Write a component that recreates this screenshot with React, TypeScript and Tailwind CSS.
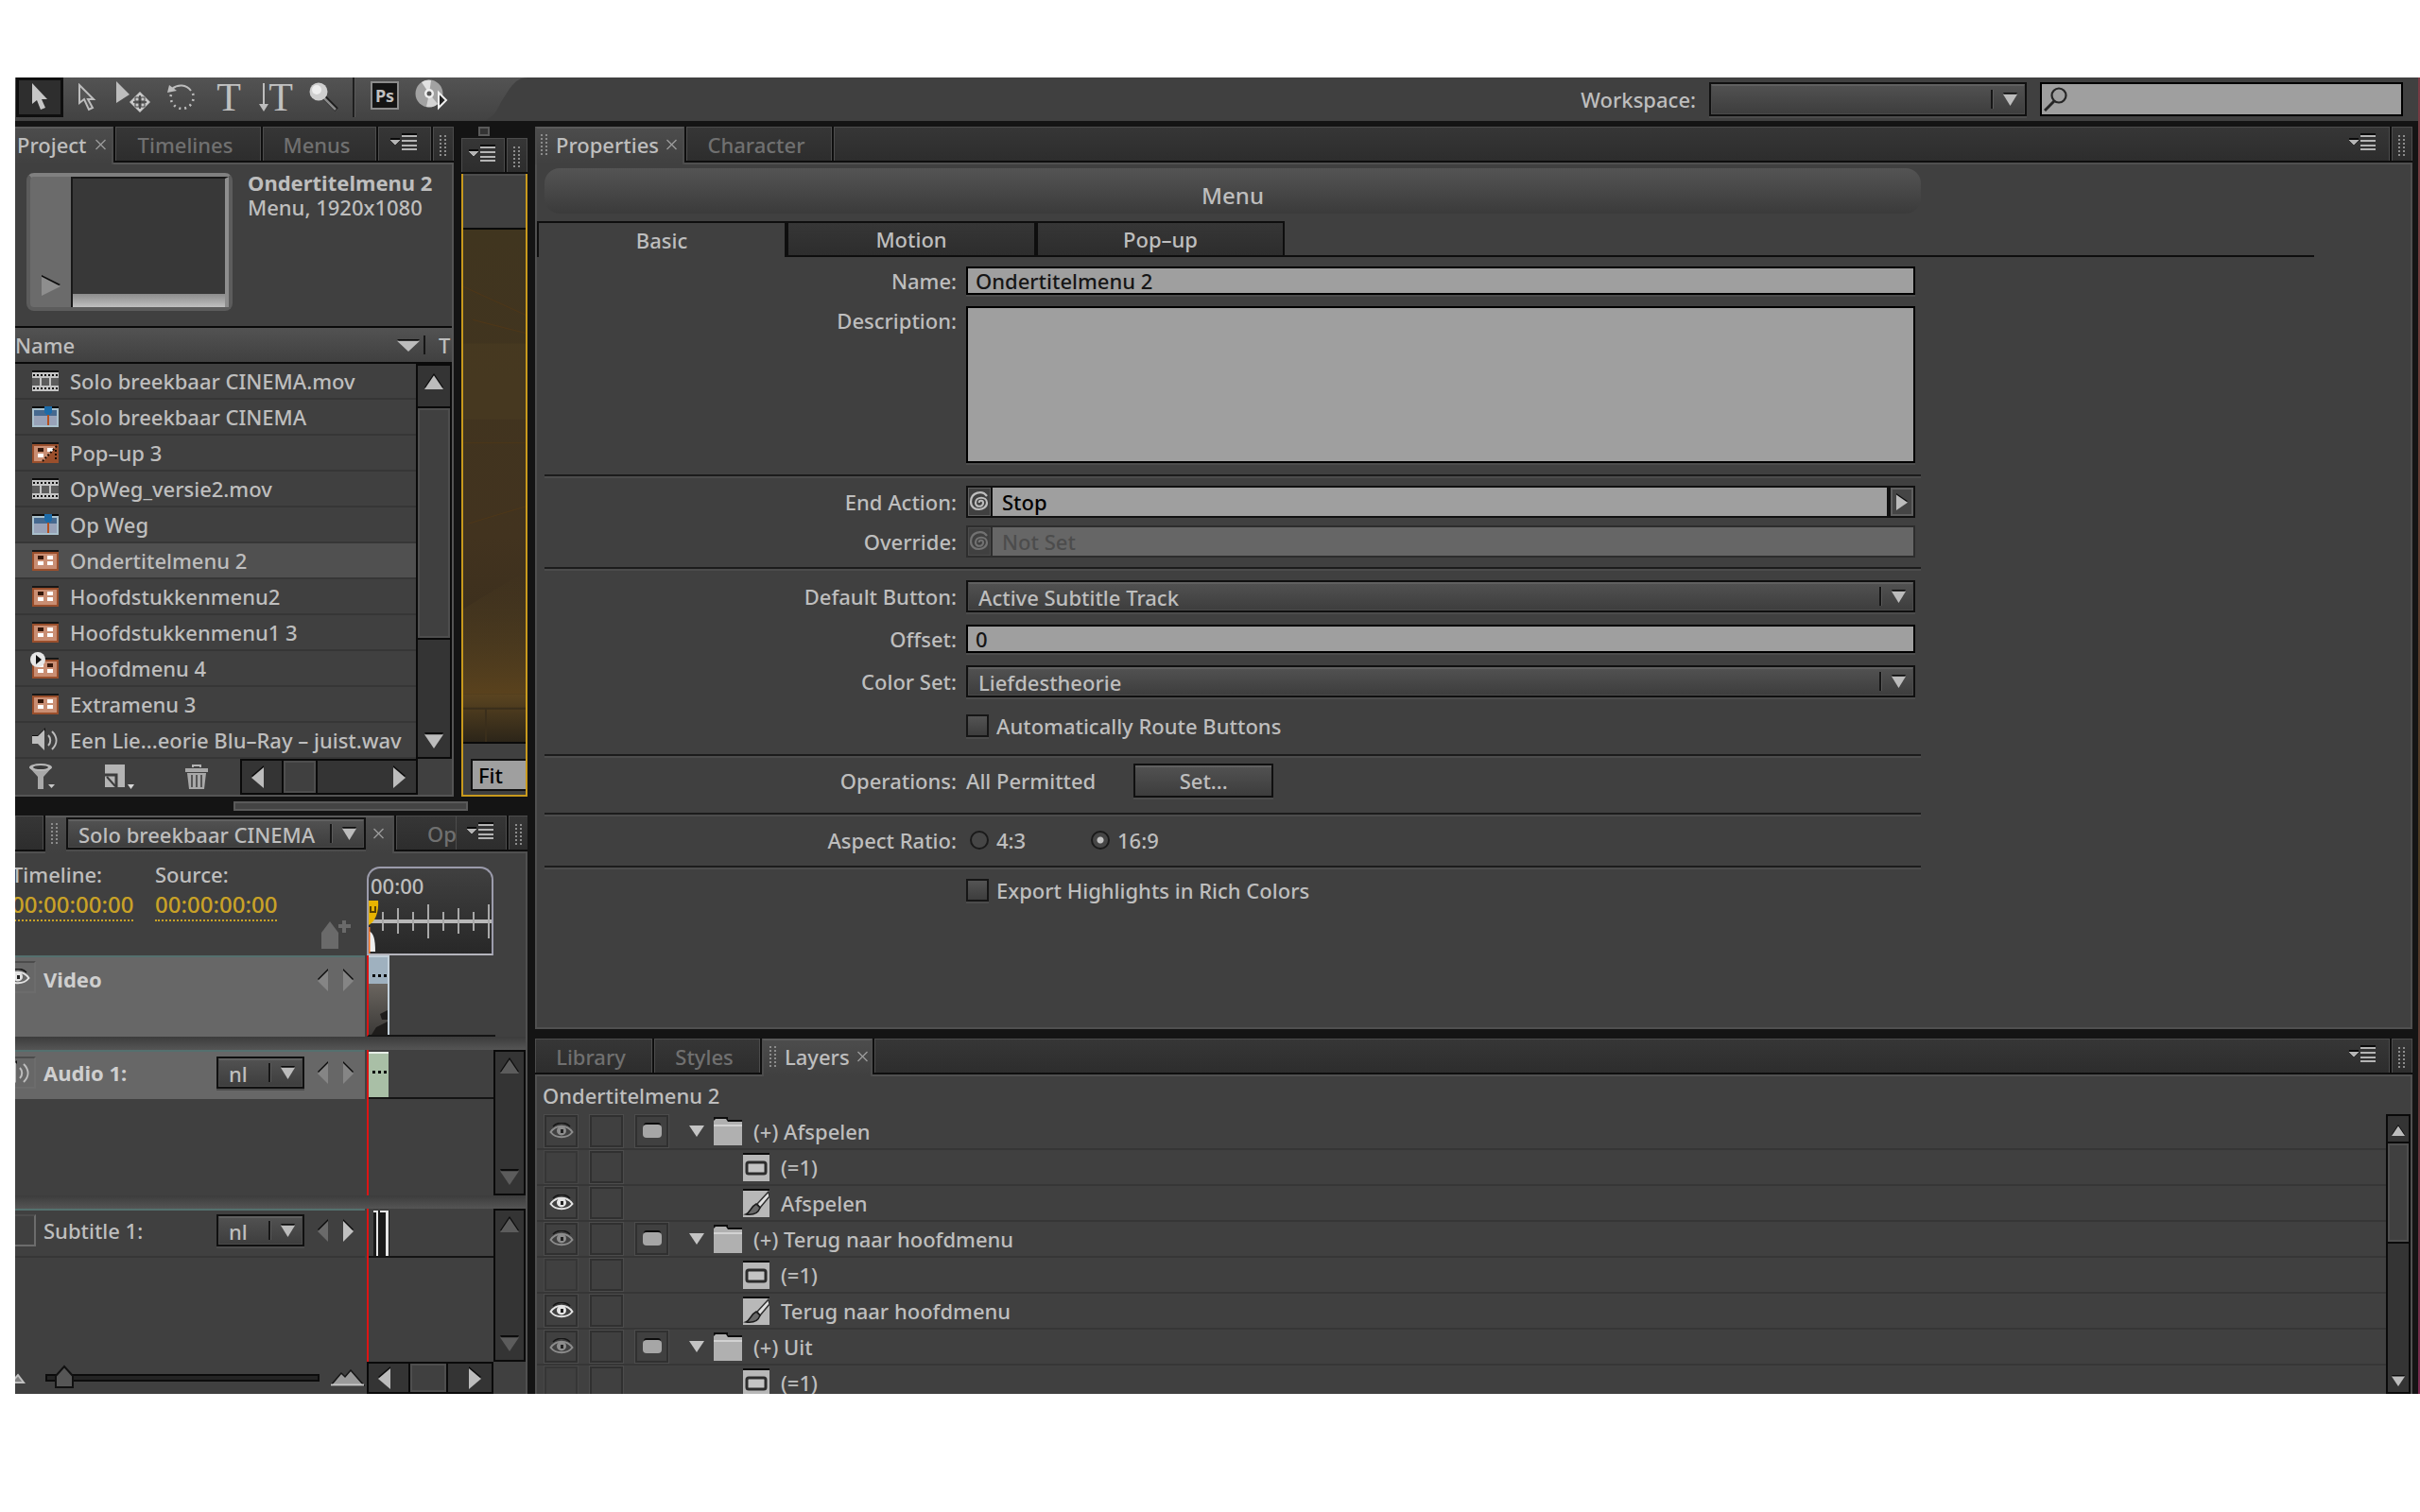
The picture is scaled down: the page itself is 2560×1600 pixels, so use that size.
import { useState } from "react";
import type { ReactNode } from "react";
import clsx from "clsx";

type AssetKind = "movie" | "timeline" | "menu" | "popup" | "first" | "audio";

const assets: { name: string; kind: AssetKind }[] = [
  { name: "Solo breekbaar CINEMA.mov", kind: "movie" },
  { name: "Solo breekbaar CINEMA", kind: "timeline" },
  { name: "Pop–up 3", kind: "popup" },
  { name: "OpWeg_versie2.mov", kind: "movie" },
  { name: "Op Weg", kind: "timeline" },
  { name: "Ondertitelmenu 2", kind: "menu" },
  { name: "Hoofdstukkenmenu2", kind: "menu" },
  { name: "Hoofdstukkenmenu1 3", kind: "menu" },
  { name: "Hoofdmenu 4", kind: "first" },
  { name: "Extramenu 3", kind: "menu" },
  { name: "Een Lie...eorie Blu–Ray – juist.wav", kind: "audio" },
];

type LayerKind = "group" | "highlight" | "image";

const layers: { name: string; kind: LayerKind }[] = [
  { name: "(+) Afspelen", kind: "group" },
  { name: "(=1)", kind: "highlight" },
  { name: "Afspelen", kind: "image" },
  { name: "(+) Terug naar hoofdmenu", kind: "group" },
  { name: "(=1)", kind: "highlight" },
  { name: "Terug naar hoofdmenu", kind: "image" },
  { name: "(+) Uit", kind: "group" },
  { name: "(=1)", kind: "highlight" },
];

/* ---------- small parts ---------- */

const Grip = () => (
  <svg width="8" height="22" viewBox="0 0 8 22" className="shrink-0" shapeRendering="crispEdges">
    {[0, 4, 8, 12, 16, 20].map((y) => (
      <g key={y} fill="#8c8c8c">
        <rect x="0" y={y} width="2" height="2" />
        <rect x="5" y={y} width="2" height="2" />
      </g>
    ))}
  </svg>
);

const GripBox = () => (
  <div className="flex h-9 w-[22px] shrink-0 justify-center border border-b-0 border-[#4c4c4c] bg-linear-to-b from-[#363636] to-[#2d2d2d] pt-2">
    <Grip />
  </div>
);

const MenuIcon = () => (
  <svg width="30" height="20" viewBox="0 0 30 20" shapeRendering="crispEdges">
    <path d="M0 5h10v2H0zM12 0h16v2H12z" fill="#0a0a0a" />
    <path d="M0 7h10l-5 6z" fill="#b4b4b4" />
    <path d="M12 2h16v2H12zM12 7h16v2H12zM12 12h16v2H12zM12 16h16v2H12z" fill="#b4b4b4" />
  </svg>
);

const PanelMenu = ({ className }: { className?: string }) => (
  <button
    type="button"
    aria-label="Panel menu"
    className={clsx(
      "flex h-9 shrink-0 items-start justify-center border border-b-0 border-[#4c4c4c] bg-linear-to-b from-[#363636] to-[#2d2d2d] pt-[6px]",
      className
    )}
  >
    <MenuIcon />
  </button>
);

const CloseButton = () => (
  <button type="button" aria-label="Close" className="shrink-0">
    <svg width="11" height="12" viewBox="0 0 11 12" fill="none" stroke="#9a9a9a" strokeWidth="1.4">
      <path d="M.5 1l10 10M10.5 1l-10 10" />
    </svg>
  </button>
);

const Tab = ({ children, className }: { children?: ReactNode; className?: string }) => (
  <button
    type="button"
    className={clsx(
      "h-9 shrink-0 overflow-hidden border border-b-0 border-[#4c4c4c] bg-linear-to-b from-[#363636] to-[#2d2d2d] pr-[6px] text-center leading-9 text-[#707070]",
      className
    )}
  >
    {children}
  </button>
);

const ActiveTab = ({ children, className }: { children: ReactNode; className?: string }) => (
  <div
    className={clsx(
      "relative z-10 -mb-[2px] flex h-10 shrink-0 items-center border-t-2 border-r-2 border-[#5a5a5a] border-r-[#4c4c4c] bg-linear-to-b from-[#4c4c4c] to-[#404040] pb-1",
      className
    )}
  >
    {children}
  </div>
);

const arrowPaths = {
  up: "M0 14L10 0l10 14z",
  down: "M0 0h20L10 14z",
  left: "M14 0v22L0 11z",
  right: "M0 0l14 11L0 22z",
};

const Arrow = ({
  dir,
  width,
  height,
  color = "#bcbcbc",
}: {
  dir: "up" | "down" | "left" | "right";
  width: number;
  height: number;
  color?: string;
}) => (
  <svg
    width={width}
    height={height}
    viewBox={dir === "up" || dir === "down" ? "0 -2 20 16" : "0 -2 14 24"}
    preserveAspectRatio="none"
  >
    <path d={arrowPaths[dir]} fill="#0c0c0c" transform="translate(0 -2)" />
    <path d={arrowPaths[dir]} fill={color} />
  </svg>
);

const Dropdown = ({
  id,
  label,
  value,
  className,
}: {
  id: string;
  label?: string;
  value: string;
  className?: string;
}) => (
  <div
    className={clsx(
      "relative border-2 border-[#101010] bg-linear-to-b from-[#525252] to-[#3d3d3d] shadow-[0_2px_0_#4c4c4c]",
      className
    )}
  >
    <select
      id={id}
      aria-label={label}
      defaultValue={value}
      className="block h-full w-full appearance-none border border-t-2 border-[#4a4a4a] border-t-[#606060] bg-transparent pr-9 pb-1 pl-[10px] text-[#bebebe] outline-none"
    >
      <option value={value}>{value}</option>
    </select>
    <div className="pointer-events-none absolute inset-y-0 right-2 flex items-center gap-[10px]">
      <span className="h-5 w-[3px] border-l-2 border-[#161616] bg-[#5a5a5a]" />
      <Arrow dir="down" width={15} height={14} />
    </div>
  </div>
);

const VScroll = ({
  size = "md",
  thumb,
  color,
  className,
}: {
  size?: "sm" | "md" | "lg";
  thumb?: string;
  color?: string;
  className?: string;
}) => {
  const width = size === "sm" ? 14 : 20;
  const height = size === "sm" ? 12 : 17;
  return (
    <div className={clsx("flex shrink-0 flex-col items-center border-2 border-[#0a0a0a] bg-[#343434]", className)}>
      <button
        type="button"
        aria-label="Scroll up"
        className={clsx("flex w-full items-center justify-center", size === "lg" ? "h-[45px] pb-3" : "h-[29px]")}
      >
        <Arrow dir="up" width={width} height={height} color={color} />
      </button>
      {thumb && (
        <div className={clsx("w-full border-2 border-[#4e4e4e] bg-[#404040] outline-2 outline-[#0a0a0a]", thumb)} />
      )}
      <button
        type="button"
        aria-label="Scroll down"
        className={clsx("mt-auto flex w-full items-center justify-center", size === "sm" ? "h-6" : "h-9")}
      >
        <Arrow dir="down" width={width} height={height} color={color} />
      </button>
    </div>
  );
};

const HScroll = ({ thumb, className }: { thumb: string; className?: string }) => (
  <div className={clsx("flex shrink-0 items-center border-2 border-[#0a0a0a] bg-[#343434]", className)}>
    <button type="button" aria-label="Scroll left" className="flex h-full w-11 items-center pl-[10px]">
      <Arrow dir="left" width={13} height={24} />
    </button>
    <div className={clsx("h-full border-2 border-[#4e4e4e] bg-[#404040] outline-2 outline-[#0a0a0a]", thumb)} />
    <button type="button" aria-label="Scroll right" className="ml-auto flex h-full w-9 items-center justify-center">
      <Arrow dir="right" width={13} height={24} />
    </button>
  </div>
);

const EyeIcon = ({ color }: { color: string }) => (
  <svg width="26" height="18" viewBox="0 0 26 18" fill="none" stroke={color}>
    <path d="M4 4C9-1 17-1 22 4" stroke="#151515" strokeWidth="1.5" />
    <path d="M1.5 10C7 1.500 19 1.500 24.500 10C19 17 7 17 1.500 10z" strokeWidth="2" />
    <circle cx="13" cy="8.500" r="5" fill={color} stroke="none" />
    <rect x="12" y="7" width="3" height="4" fill="#222" stroke="none" />
  </svg>
);

const SpeakerIcon = () => (
  <svg width="28" height="26" viewBox="0 0 28 26">
    <path d="M0 8h6l8-8v3L6 11H0z" fill="#101010" />
    <path d="M0 9h6l7-7v22l-7-7H0z" fill="#bdbdbd" />
    <path d="M17 8c3 3 3 8 0 11M21 4c6 6 6 13 0 19" fill="none" stroke="#bdbdbd" strokeWidth="2" />
  </svg>
);

/* ---------- asset icons ---------- */

const AssetIcon = ({ kind }: { kind: AssetKind }) => {
  if (kind === "audio") return <SpeakerIcon />;
  if (kind === "movie") {
    return (
      <svg width="28" height="22" viewBox="0 0 28 22" shapeRendering="crispEdges">
        <rect width="28" height="22" fill="#c4c4c4" />
        <rect width="28" height="2" fill="#0c0c0c" />
        <rect y="8" width="28" height="8" fill="#5c5c5c" />
        <path d="M8 8h2v8H8zM18 8h2v8h-2z" fill="#c4c4c4" />
        <path d="M1 5h28M1 19h28" stroke="#0c0c0c" strokeWidth="2" strokeDasharray="2 2" />
      </svg>
    );
  }
  if (kind === "timeline") {
    return (
      <svg width="28" height="22" viewBox="0 0 28 22" shapeRendering="crispEdges">
        <rect width="28" height="22" fill="#a9c0cc" />
        <rect width="28" height="2" fill="#0c0c0c" />
        <rect x="2" y="4" width="24" height="16" fill="#98a2b8" />
        <rect x="2" y="4" width="24" height="6" fill="#46698f" />
        <path d="M13 0h8v6l-2 3h-4l-2-3z" fill="#1c6ba8" />
        <rect x="16" y="9" width="2" height="11" fill="#b5501e" />
      </svg>
    );
  }
  return (
    <svg width="30" height="34" viewBox="-2 -6 30 34" className="-ml-[2px]">
      <g shapeRendering="crispEdges">
        <rect width="28" height="22" fill="#9a4f2c" />
        <rect width="28" height="2" fill="#171717" />
        <rect x="2" y="4" width="24" height="16" fill="#c98e73" />
        <rect x="6" y="6" width="6" height="4" fill={kind === "first" ? "#fff" : "#35180b"} />
        <rect x="16" y="6" width="6" height="4" fill={kind === "first" ? "#35180b" : "#fff"} />
        <rect x="6" y="12" width="6" height="4" fill="#fff" />
        {kind !== "popup" && <rect x="16" y="12" width="6" height="4" fill="#fff" />}
      </g>
      {kind === "popup" && (
        <>
          <path d="M26 4v16H12z" fill="#9a4f2c" />
          <path d="M26 4L11 20M25 8v12" stroke="#1a0d06" strokeWidth="2" strokeDasharray="2 2" />
        </>
      )}
      {kind === "first" && (
        <>
          <circle cx="6" cy="2" r="8" fill="#e6e6e6" />
          <path d="M4 -3l6 5-6 5z" fill="#111" />
        </>
      )}
    </svg>
  );
};

const LayerIcon = ({ kind }: { kind: LayerKind }) => {
  if (kind === "group") {
    return (
      <svg width="30" height="30" viewBox="0 0 30 30">
        <path d="M0 0h15v3h15v4H0z" fill="#0c0c0c" />
        <path d="M0 4l2-2h11l2 3h15v25H0z" fill="#b0b0b0" />
        <path d="M0 9h30" stroke="#d2d2d2" strokeWidth="2" />
      </svg>
    );
  }
  return (
    <svg width="28" height="30" viewBox="0 0 28 30">
      <rect width="28" height="30" fill="#b8b8b8" />
      <rect width="28" height="2" fill="#0c0c0c" />
      {kind === "highlight" ? (
        <rect x="4" y="10" width="20" height="12" rx="2" fill="#c4c4c4" stroke="#2c2c2c" strokeWidth="3" />
      ) : (
        <>
          <path d="M27 3L15 16l3 4L28 8z" fill="#e0e0e0" stroke="#303030" strokeWidth="1.5" />
          <path d="M14 16l4 4c-2 6-8 8-15 7 5-2 5-8 11-11z" fill="#686868" stroke="#1c1c1c" strokeWidth="1.5" />
        </>
      )}
    </svg>
  );
};

/* ---------- toolbar ---------- */

const toolIcons: { name: string; icon: ReactNode }[] = [
  {
    name: "Selection Tool",
    icon: (
      <svg width="18" height="30" viewBox="0 0 18 30">
        <path d="M1 0v22l5-4 4 10 5-2-4-9h6z" fill="#c6c6c6" />
      </svg>
    ),
  },
  {
    name: "Direct Select Tool",
    icon: (
      <svg width="20" height="30" viewBox="0 0 20 30">
        <path d="M2 2v19l5-4 5 11 4-2-5-9h6z" fill="#555" stroke="#bdbdbd" strokeWidth="2" />
      </svg>
    ),
  },
  {
    name: "Move Tool",
    icon: (
      <svg width="38" height="34" viewBox="0 0 38 34">
        <path d="M0 0v23l14-9z" fill="#bdbdbd" />
        <path d="M25 11l11 11-11 11-11-11z" fill="#c8c8c8" />
        <path d="M25 15v14M18 22h14" stroke="#333" strokeWidth="1.6" />
        <path d="M20 17h4v4h-4zM26 17h4v4h-4zM20 23h4v4h-4zM26 23h4v4h-4z" fill="none" stroke="#444" />
      </svg>
    ),
  },
  {
    name: "Rotate Tool",
    icon: (
      <svg width="30" height="30" viewBox="0 0 30 30" fill="none" stroke="#bdbdbd">
        <path d="M27 11a12 12 0 1 1-23 1" strokeWidth="2.6" strokeDasharray="2 4" />
        <path d="M5 6C11 1 20 1 25 8" strokeWidth="2" />
        <path d="M0 10l2-8 8 6z" fill="#bdbdbd" stroke="none" />
      </svg>
    ),
  },
  { name: "Text Tool", icon: <span className="font-['Liberation_Serif',serif] text-[42px] leading-none">T</span> },
  {
    name: "Vertical Text Tool",
    icon: (
      <span className="flex items-center">
        <svg width="10" height="30" viewBox="0 0 10 30">
          <path d="M4 0h2v22h4l-5 8-5-8h4z" fill="#bdbdbd" />
        </svg>
        <span className="font-['Liberation_Serif',serif] text-[42px] leading-none">T</span>
      </span>
    ),
  },
  {
    name: "Zoom Tool",
    icon: (
      <svg width="32" height="32" viewBox="0 0 32 32">
        <path d="M17 16l13 13" stroke="#1c1c1c" strokeWidth="5" />
        <path d="M16 16l13 13" stroke="#8a8a8a" strokeWidth="2.500" />
        <circle cx="11" cy="10" r="9.500" fill="#cfcfcf" />
        <circle cx="9" cy="8" r="5" fill="#eee" />
      </svg>
    ),
  },
];

const Toolbar = () => (
  <header className="flex h-[46px] shrink-0 bg-[#404040]">
    <div className="flex bg-linear-to-b from-[#535353] to-[#424242] pl-px">
      {toolIcons.map((tool, i) => (
        <button
          key={tool.name}
          type="button"
          aria-label={tool.name}
          className={clsx(
            "flex h-[42px] w-[50px] items-center justify-center font-normal text-[#c0c0c0]",
            i === 0 && "border-[3px] border-[#0e0e0e] bg-[#2e2e2e]"
          )}
        >
          {tool.icon}
        </button>
      ))}
      <span className="mx-[6px] h-[42px] w-[3px] border-r border-l-2 border-l-[#1e1e1e] border-r-[#5a5a5a]" />
      <button type="button" aria-label="Edit in Photoshop" className="flex h-[42px] w-[50px] items-center justify-center pb-1">
        <span className="flex h-[30px] w-[30px] items-center justify-center border-2 border-[#8c8c8c] bg-[#141414] text-lg leading-none font-bold text-[#c0c0c0]">
          Ps
        </span>
      </button>
      <button type="button" aria-label="Preview" className="flex h-[42px] w-[50px] items-center justify-center pb-1">
        <svg width="36" height="34" viewBox="0 0 36 34">
          <circle cx="15" cy="15" r="14.500" fill="#a2a2a2" />
          <path d="M15 15L7 3A14 14 0 0 1 17 1z" fill="#e2e2e2" />
          <path d="M15 15l9 11A14 14 0 0 1 12 29z" fill="#d4d4d4" />
          <circle cx="15" cy="15" r="5" fill="#efefef" />
          <circle cx="15" cy="15" r="2.500" fill="#555" />
          <path d="M25 14l8 8-8 8z" fill="#222" stroke="#f0f0f0" strokeWidth="2" />
        </svg>
      </button>
    </div>
    <svg width="84" height="46" viewBox="0 0 84 46" preserveAspectRatio="none">
      <defs>
        <linearGradient id="bar" x1="0" y1="0" x2="0" y2="1">
          <stop offset="0" stopColor="#535353" />
          <stop offset="1" stopColor="#424242" />
        </linearGradient>
      </defs>
      <path d="M0 0h76C62 0 56 14 48 26C43 36 40 42 30 46H0z" fill="url(#bar)" />
    </svg>
    <div className="ml-auto flex items-center gap-[14px] pr-4">
      <label htmlFor="workspace">Workspace:</label>
      <Dropdown id="workspace" value="" className="h-9 w-[336px]" />
      <div className="relative">
        <input
          type="search"
          aria-label="Search"
          className="block h-9 w-[384px] border-2 border-black bg-[#9f9f9f] pl-9 text-black outline-none"
        />
        <svg width="26" height="26" viewBox="0 0 26 26" className="pointer-events-none absolute top-[5px] left-1" fill="none" stroke="#262626">
          <circle cx="16" cy="9" r="7.500" strokeWidth="2.200" />
          <path d="M11 15L1 25" strokeWidth="3" />
        </svg>
      </div>
    </div>
  </header>
);

/* ---------- project ---------- */

const ProjectPanel = () => {
  const [selected, setSelected] = useState("Ondertitelmenu 2");

  return (
    <section className="w-[464px] shrink-0 overflow-hidden">
      <div className="flex h-[38px] gap-[2px] bg-[#0e0e0e]">
        <ActiveTab className="w-[104px] justify-between pr-[6px] pl-[2px]">
          <span>Project</span>
          <CloseButton />
        </ActiveTab>
        <Tab className="w-[154px]">Timelines</Tab>
        <Tab className="w-[120px]">Menus</Tab>
        <PanelMenu className="w-[56px]" />
        <GripBox />
      </div>
      <div className="border-2 border-l-0 border-[#555] bg-[#404040]">
        <div className="flex h-[171px] pt-[6px] pl-3">
          <div className="mt-[3px] flex h-[146px] w-[218px] items-end rounded-lg border-4 border-[#5c5c5c] border-t-[#808080] bg-[#6b6b6b]">
            <div className="flex w-[43px] justify-center pb-3">
              <Arrow dir="right" width={20} height={22} color="#8e8e8e" />
            </div>
            <div className="flex h-full flex-1 flex-col border-2 border-r-4 border-[#181818] border-r-[#8e8e8e] border-b-0 bg-[#383838]">
              <div className="mt-auto h-[14px] bg-linear-to-b from-[#8c8c8c] to-[#c0c0c0]" />
            </div>
          </div>
          <div className="ml-4 leading-[26px] whitespace-nowrap">
            <p className="font-bold">Ondertitelmenu 2</p>
            <p>Menu, 1920x1080</p>
          </div>
        </div>
        <div className="flex h-10 items-center border-y-2 border-[#0a0a0a] bg-linear-to-b from-[#525252] to-[#404040]">
          <span>Name</span>
          <span className="mr-1 ml-auto">
            <Arrow dir="down" width={24} height={13} />
          </span>
          <span className="mr-[14px] h-5 border-l-2 border-[#161616]" />
          <span className="w-[14px]">T</span>
        </div>
        <div className="flex">
          <ul className="min-w-0 flex-1">
            {assets.map((asset) => (
              <li key={asset.name} className="border-b-2 border-[#363636]">
                <button
                  type="button"
                  onClick={() => setSelected(asset.name)}
                  className={clsx(
                    "flex h-9 w-full items-center pl-[18px] text-left whitespace-nowrap",
                    selected === asset.name && "bg-[#505050]"
                  )}
                >
                  <span className="flex w-10 items-center">
                    <AssetIcon kind={asset.kind} />
                  </span>
                  {asset.name}
                </button>
              </li>
            ))}
          </ul>
          <VScroll size="lg" className="w-[38px]" thumb="h-[243px]" />
        </div>
        <div className="flex h-[38px] items-center">
          <button type="button" aria-label="Filter" className="ml-[14px]">
            <svg width="30" height="28" viewBox="0 0 30 28">
              <path d="M1 4l9 10v13h6V14l9-10z" fill="#a8a8a8" />
              <ellipse cx="13" cy="4" rx="12" ry="4" fill="#b8b8b8" />
              <ellipse cx="13" cy="4" rx="8" ry="2" fill="#3a3a3a" />
              <path d="M21 22h7l-3.500 4z" fill="#c8c8c8" />
            </svg>
          </button>
          <button type="button" aria-label="New item" className="ml-[50px]">
            <svg width="32" height="28" viewBox="0 0 32 28">
              <rect x="1" y="1" width="21" height="24" fill="#b4b4b4" />
              <path d="M1 12h12v13" fill="none" stroke="#3c3c3c" strokeWidth="3" />
              <path d="M3 14l9 10" stroke="#3c3c3c" strokeWidth="2" />
              <path d="M25 22h7l-3.500 5z" fill="#d8d8d8" />
            </svg>
          </button>
          <button type="button" aria-label="Delete" className="ml-[54px]">
            <svg width="24" height="26" viewBox="0 0 24 26">
              <path d="M8 3V1h8v2" fill="none" stroke="#b4b4b4" strokeWidth="2" />
              <path d="M0 4h24v4H0zM2 9h20l-2 17H4z" fill="#a8a8a8" />
              <path d="M7 11v13M12 11v13M17 11v13" stroke="#555" strokeWidth="2" />
            </svg>
          </button>
          <HScroll className="ml-auto mr-9 h-[38px] w-[188px]" thumb="w-[34px]" />
        </div>
      </div>
    </section>
  );
};

/* ---------- menu viewer ---------- */

const ViewerPanel = () => (
  <section className="flex w-[70px] shrink-0 flex-col overflow-hidden">
    <div className="flex h-3 pl-[18px]">
      <span className="h-[10px] w-[12px] border-2 border-[#5a5a5a] bg-[#333]" />
    </div>
    <div className="flex h-[38px] gap-[2px] bg-[#0e0e0e]">
      <PanelMenu className="w-[46px]" />
      <GripBox />
    </div>
    <div className="flex flex-1 flex-col border-2 border-t-0 border-[#c8991d] bg-[#404040]">
      <div className="h-[59px] border-t-2 border-b-2 border-t-[#4c4c4c] border-b-[#0a0a0a]" />
      <div className="flex-1 bg-linear-to-b from-[#40351f] via-[#42331f] via-60% to-[#352a1a]">
        <svg viewBox="0 0 66 540" className="h-full w-full" preserveAspectRatio="none">
          <defs>
            <linearGradient id="glow" x1="0" y1="0" x2="0" y2="1">
              <stop offset="0" stopColor="#4b3d22" stopOpacity="0" />
              <stop offset="1" stopColor="#5a421d" />
            </linearGradient>
            <linearGradient id="floor" x1="0" y1="0" x2="0" y2="1">
              <stop offset="0" stopColor="#5a4420" />
              <stop offset="1" stopColor="#2c2519" />
            </linearGradient>
          </defs>
          <path d="M0 120h66v80H0z" fill="#4a3c22" opacity=".6" />
          <path d="M0 400L66 360v130H0z" fill="url(#glow)" />
          <path d="M0 490h66v50H0z" fill="url(#floor)" />
          <path d="M0 505h66M24 505v35" stroke="#3a2e1b" strokeWidth="2" fill="none" />
          <path d="M0 60l66 30M10 95l56 14M5 310l61-18M0 225h66" stroke="#4e3719" strokeWidth="1" fill="none" />
        </svg>
      </div>
      <div className="flex h-14 items-end justify-end border-t-2 border-[#0a0a0a] pb-1">
        <input
          aria-label="Zoom level"
          defaultValue="Fit"
          className="h-[34px] w-[58px] border-2 border-r-0 border-[#111] bg-[#9f9f9f] pl-[6px] text-black outline-none"
        />
      </div>
    </div>
  </section>
);

/* ---------- timeline ---------- */

const KeyArrows = ({ prev = "#858585", next = "#858585" }: { prev?: string; next?: string }) => (
  <div className="flex gap-4">
    <button type="button" aria-label="Previous">
      <Arrow dir="left" width={11} height={24} color={prev} />
    </button>
    <button type="button" aria-label="Next">
      <Arrow dir="right" width={11} height={24} color={next} />
    </button>
  </div>
);

const TrackToggle = ({ label, children }: { label: string; children?: ReactNode }) => (
  <button
    type="button"
    aria-label={label}
    className="flex h-[34px] w-[22px] shrink-0 items-center justify-end overflow-hidden border-2 border-l-0 border-[#4c4c4c] border-r-[#6c6c6c] border-b-[#6c6c6c]"
  >
    {children}
  </button>
);

const Timecode = ({ label, href }: { label: string; href: string }) => (
  <div className="w-[134px]">
    <p>{label}</p>
    <a href={href} className="border-b-2 border-dotted border-[#c9a227] text-2xl leading-7 text-[#c9a227]">
      00:00:00:00
    </a>
  </div>
);

const Band = () => <div className="h-[14px] bg-linear-to-b from-[#3c3c3c] to-[#555]" />;

const TimelinePanel = () => (
  <section className="flex flex-1 flex-col overflow-hidden">
    <div className="flex h-[38px] gap-[2px] bg-[#0e0e0e]">
      <Tab className="w-[30px]" />
      <ActiveTab className="w-[369px] gap-2 pr-2 pl-[6px]">
        <Grip />
        <Dropdown id="sequence" label="Timeline" value="Solo breekbaar CINEMA" className="h-[34px] w-[317px]" />
        <CloseButton />
      </ActiveTab>
      <div className="flex">
        <Tab className="w-[63px] border-r-0 pl-8">Op</Tab>
        <PanelMenu className="w-[54px]" />
      </div>
      <GripBox />
    </div>
    <div className="flex flex-1 flex-col border-t-2 border-r-2 border-[#505050] bg-[#404040]">
      <div className="flex h-[108px]">
        <div className="-ml-1 flex w-[376px] gap-[18px] pt-[6px] leading-8">
          <Timecode label="Timeline:" href="#timeline" />
          <Timecode label="Source:" href="#source" />
          <button type="button" aria-label="Add chapter" className="mt-auto mb-[6px] ml-6">
            <svg width="32" height="32" viewBox="0 0 32 32" fill="#6a6a6a">
              <path d="M0 14l9-12 9 12v17H0zM22 1h4v4h5v4h-5v5h-4V9h-4V5h4z" />
            </svg>
          </button>
        </div>
        <div className="relative mt-[14px] h-[94px] w-[134px] overflow-hidden rounded-t-[14px] border-2 border-[#9c9cac] border-b-[#b4b4bc] bg-linear-to-b from-[#404040] to-[#282828]">
          <p className="pt-1 pl-[2px]">00:00</p>
          <svg width="130" height="88" viewBox="0 0 130 88" className="absolute bottom-0 left-0">
            <path d="M0 54h130" stroke="#b8b8b8" strokeWidth="4" />
            <path d="M15 44v20M31 40v27M47 44v20M63 36v36M79 44v20M95 40v27M111 44v20M127 36v36" stroke="#a8a8a8" strokeWidth="2" />
            <path d="M0 32h10c1 12-3 22-10 26z" fill="#e8b400" />
            <path d="M2 38v6h5v-6" fill="none" stroke="#5a4300" strokeWidth="2" />
            <path d="M0 64c5 2 7 8 7 22H0z" fill="#eee" />
            <path d="M0 60v28" stroke="#f07020" strokeWidth="3" />
          </svg>
        </div>
      </div>

      <div className="flex h-[86px] pr-8">
        <div className="flex w-[370px] items-start border-t-2 border-[#54706e] bg-[#676767] pt-1 pr-3">
          <TrackToggle label="Show video">
            <span className="shrink-0 pr-1">
              <EyeIcon color="#e2e2e2" />
            </span>
          </TrackToggle>
          <span className="ml-2 leading-[38px] font-bold text-[#cfcfcf]">Video</span>
          <span className="mt-2 ml-auto">
            <KeyArrows />
          </span>
        </div>
        <div className="ml-[2px] flex flex-1 border-b-2 border-l-2 border-b-[#141414] border-l-[#dc1414]">
          <div className="w-[22px] border-t-2 border-r-2 border-[#c3d0da]">
            <div className="flex h-7 items-end bg-[#9fb1bf] pb-1 text-black">
              <svg width="20" height="10" viewBox="0 0 20 10">
                <path d="M4 4h3v3H4zM10 4h3v3h-3zM16 4h3v3h-3z" />
              </svg>
            </div>
            <svg width="20" height="54" viewBox="0 0 20 54">
              <defs>
                <linearGradient id="still" x1="0" y1="0" x2="0" y2="1">
                  <stop offset="0" stopColor="#6a655f" />
                  <stop offset="1" stopColor="#3c3a38" />
                </linearGradient>
              </defs>
              <rect width="20" height="54" fill="url(#still)" />
              <path d="M12 32l8-4v10h-6zM8 46l12-6v14H3z" fill="#1e1c1b" />
            </svg>
          </div>
        </div>
      </div>

      <Band />

      <div className="flex h-[154px]">
        <div className="w-[370px]">
          <div className="flex h-[52px] items-center border-t-2 border-[#54706e] bg-[#676767] pr-3 pb-[6px]">
            <TrackToggle label="Mute audio">
              <span className="shrink-0 pr-1">
                <SpeakerIcon />
              </span>
            </TrackToggle>
            <span className="ml-2 font-bold text-[#cfcfcf]">Audio 1:</span>
            <Dropdown id="audio-lang" label="Audio language" value="nl" className="ml-auto mr-[14px] h-[34px] w-[93px]" />
            <KeyArrows />
          </div>
        </div>
        <div className="ml-[2px] flex flex-1 items-start border-l-2 border-[#dc1414]">
          <div className="flex h-[52px] flex-1 border-b-2 border-[#141414] pt-[2px]">
            <div className="w-[21px] border-t-2 border-[#e6ece6] bg-[#a9bfa6] pt-[14px]">
              <svg width="20" height="10" viewBox="0 0 20 10">
                <path d="M4 4h3v3H4zM10 4h3v3h-3zM16 4h3v3h-3z" />
              </svg>
            </div>
          </div>
        </div>
        <VScroll className="w-[34px]" color="#5c5c5c" />
      </div>

      <Band />

      <div className="flex h-[162px]">
        <div className="w-[370px]">
          <div className="flex h-[52px] items-center border-t-2 border-b-2 border-[#54706e] border-b-[#363636] pr-3 pb-[6px]">
            <TrackToggle label="Show subtitle" />
            <span className="ml-2">Subtitle 1:</span>
            <Dropdown id="sub-lang" label="Subtitle language" value="nl" className="ml-auto mr-[14px] h-[34px] w-[93px]" />
            <KeyArrows prev="#6a6a6a" next="#c0c0c0" />
          </div>
        </div>
        <div className="ml-[2px] flex flex-1 items-start border-l-2 border-[#dc1414]">
          <div className="flex h-[52px] flex-1 border-b-2 border-[#141414] pt-[2px] pl-[5px]">
            <svg width="18" height="48" viewBox="0 0 18 48" shapeRendering="crispEdges">
              <rect width="17" height="48" fill="#1a1a1a" />
              <path d="M0 0h5v48H3V2H0zM7 0h9v48h-3V2H7z" fill="#e6e6e6" />
            </svg>
          </div>
        </div>
        <VScroll className="w-[34px]" color="#5c5c5c" />
      </div>

      <div className="flex h-[34px] items-center">
        <svg width="12" height="12" viewBox="0 0 12 12">
          <path d="M-4 11L3 3l6 8z" fill="#808080" stroke="#c0c0c0" strokeWidth="2" />
        </svg>
        <div className="relative ml-5 h-2 w-[290px] border-2 border-[#0c0c0c] bg-[#242424]">
          <input
            type="range"
            aria-label="Timeline zoom"
            defaultValue={5}
            className="absolute inset-0 m-0 h-full w-full opacity-0"
          />
          <svg width="20" height="26" viewBox="0 0 20 26" className="pointer-events-none absolute -top-[12px] left-[8px]">
            <path d="M1 12l9-10 9 10v12H1z" fill="#565656" stroke="#111" strokeWidth="2" />
          </svg>
        </div>
        <svg width="36" height="18" viewBox="0 0 36 18" className="mr-[2px] ml-auto">
          <path d="M0 17L11 4l4 4 6-7 14 16z" fill="#9a9a9a" stroke="#151515" strokeWidth="1.500" />
          <path d="M0 16.500h35" stroke="#c8c8c8" strokeWidth="2" />
        </svg>
        <HScroll className="mr-[34px] h-[34px] w-[134px]" thumb="w-[38px]" />
      </div>
    </div>
  </section>
);

/* ---------- properties ---------- */

const Rule = () => <hr className="h-1 border-0 border-t-2 border-[#1c1c1c] bg-[#4c4c4c]" />;

const Row = ({
  label,
  htmlFor,
  top,
  children,
}: {
  label?: string;
  htmlFor?: string;
  top?: boolean;
  children: ReactNode;
}) => (
  <div className={clsx("grid grid-cols-[446px_1fr] pr-[6px]", top ? "items-start" : "items-center")}>
    <label htmlFor={htmlFor} className="pr-[10px] text-right leading-[30px]">
      {label}
    </label>
    {children}
  </div>
);

const fieldClass = "w-full border-2 border-black bg-[#9f9f9f] text-[#161616] shadow-[0_2px_0_#4c4c4c] outline-none";

const WhipIcon = () => (
  <svg width="22" height="24" viewBox="0 0 22 24" fill="none" stroke="#bebebe" strokeWidth="2.200">
    <path d="M11 13c-1-3 4-3 4 0 0 5-8 5-8 0 0-7 12-7 12 0 0 9-17 10-17-1C2 2 14-1 19 6" />
  </svg>
);

const LinkField = ({ id, value, disabled }: { id: string; value: string; disabled?: boolean }) => (
  <div className={clsx("flex h-[34px] border-2 border-[#111] bg-[#111]", disabled && "opacity-40")}>
    <button
      type="button"
      aria-label="Pick whip"
      disabled={disabled}
      className="mr-[2px] flex w-6 shrink-0 items-center justify-center border border-[#606060] bg-[#404040]"
    >
      <WhipIcon />
    </button>
    <input
      id={id}
      defaultValue={value}
      disabled={disabled}
      className={clsx(
        "min-w-0 flex-1 bg-[#9f9f9f] pl-[10px] outline-none",
        disabled ? "text-[#606060]" : "text-black"
      )}
    />
    {!disabled && (
      <button
        type="button"
        aria-label="Choose target"
        className="ml-1 flex w-6 shrink-0 items-center justify-center border-2 border-[#606060] bg-[#454545]"
      >
        <Arrow dir="right" width={12} height={18} />
      </button>
    )}
  </div>
);

const CheckRow = ({ id, text }: { id: string; text: string }) => (
  <Row>
    <div className="flex h-[34px] items-center gap-2">
      <input
        id={id}
        type="checkbox"
        className="h-6 w-6 appearance-none border-2 border-[#161616] bg-linear-to-b from-[#545454] to-[#3d3d3d] shadow-[0_2px_0_#4c4c4c] checked:from-[#bebebe] checked:to-[#9f9f9f]"
      />
      <label htmlFor={id}>{text}</label>
    </div>
  </Row>
);

const PropertiesPanel = () => {
  const [ratio, setRatio] = useState("16:9");

  return (
    <section className="flex flex-1 flex-col">
      <div className="flex h-[38px] gap-[2px] bg-[#0e0e0e]">
        <ActiveTab className="w-[158px] gap-2 border-l-2 border-l-[#4c4c4c] pl-1">
          <Grip />
          <span>Properties</span>
          <CloseButton />
        </ActiveTab>
        <Tab className="w-[154px]">Character</Tab>
        <div className="flex h-9 flex-1 justify-end border border-b-0 border-[#4c4c4c] bg-linear-to-b from-[#363636] to-[#2d2d2d] pr-3">
          <button type="button" aria-label="Panel menu" className="mb-1">
            <MenuIcon />
          </button>
        </div>
        <GripBox />
      </div>
      <div className="flex-1 border-2 border-[#505050] bg-[#404040]">
        <div className="max-w-[1464px] pt-1 pl-2">
          <h1 className="h-12 rounded-[16px] bg-linear-to-b from-[#545454] to-[#3b3b3b] pt-2 text-center text-2xl leading-[42px]">
            Menu
          </h1>
        </div>
        <div className="mt-2 flex pr-[102px]">
          <button type="button" className="h-[38px] w-[262px] border-t-2 border-l-2 border-[#0e0e0e]">
            Basic
          </button>
          <button type="button" className="h-[38px] w-[266px] border-2 border-[#0e0e0e] border-l-4 bg-linear-to-b from-[#363636] to-[#2d2d2d]">
            Motion
          </button>
          <button type="button" className="h-[38px] w-[263px] border-2 border-[#0e0e0e] bg-linear-to-b from-[#363636] to-[#2d2d2d]">
            Pop–up
          </button>
          <span className="flex-1 border-b-2 border-[#0e0e0e]" />
        </div>
        <form className="max-w-[1464px] pl-2" onSubmit={(e) => e.preventDefault()}>
          <div className="flex flex-col gap-3 pt-[10px] pb-3">
            <Row label="Name:" htmlFor="name">
              <input id="name" defaultValue="Ondertitelmenu 2" className={clsx(fieldClass, "h-[30px] pl-2")} />
            </Row>
            <Row label="Description:" htmlFor="description" top>
              <textarea id="description" className={clsx(fieldClass, "block h-[166px] resize-none")} />
            </Row>
          </div>
          <Rule />
          <div className="flex flex-col gap-2 pt-2 pb-[10px]">
            <Row label="End Action:" htmlFor="end-action">
              <LinkField id="end-action" value="Stop" />
            </Row>
            <Row label="Override:" htmlFor="override">
              <LinkField id="override" value="Not Set" disabled />
            </Row>
          </div>
          <Rule />
          <div className="flex flex-col gap-[13px] pt-[10px] pb-[13px]">
            <Row label="Default Button:" htmlFor="default-button">
              <Dropdown id="default-button" value="Active Subtitle Track" className="h-[34px]" />
            </Row>
            <Row label="Offset:" htmlFor="offset">
              <input id="offset" defaultValue="0" className={clsx(fieldClass, "h-[30px] pl-2")} />
            </Row>
            <Row label="Color Set:" htmlFor="color-set">
              <Dropdown id="color-set" value="Liefdestheorie" className="h-[34px]" />
            </Row>
            <CheckRow id="auto-route" text="Automatically Route Buttons" />
          </div>
          <Rule />
          <div className="pt-[6px] pb-4">
            <Row label="Operations:" htmlFor="operations">
              <div className="flex items-center gap-10">
                <output id="operations">All Permitted</output>
                <button
                  type="button"
                  className="h-9 w-[148px] border-2 border-[#101010] bg-linear-to-b from-[#525252] to-[#3d3d3d] shadow-[0_2px_0_#4c4c4c] inset-shadow-[0_2px_0_#606060]"
                >
                  Set...
                </button>
              </div>
            </Row>
          </div>
          <Rule />
          <div className="pt-2 pb-[10px]">
            <Row label="Aspect Ratio:">
              <div className="flex h-[34px] items-center">
                {["4:3", "16:9"].map((value) => (
                  <label key={value} className="flex w-32 items-center gap-2 pl-1">
                    <input
                      type="radio"
                      name="ratio"
                      checked={ratio === value}
                      onChange={() => setRatio(value)}
                      className="h-5 w-5 appearance-none rounded-full border-2 border-[#1a1a1a] bg-[#464646] checked:bg-[radial-gradient(circle,#c4c4c4_3px,#464646_4px)]"
                    />
                    {value}
                  </label>
                ))}
              </div>
            </Row>
          </div>
          <Rule />
          <div className="pt-[5px]">
            <CheckRow id="rich-colors" text="Export Highlights in Rich Colors" />
          </div>
        </form>
      </div>
    </section>
  );
};

/* ---------- layers ---------- */

const boxClass = "flex h-[34px] w-[35px] shrink-0 items-center justify-center border-2 border-[#303030] outline-1 outline-[#4c4c4c]";

const LayersPanel = () => (
  <section className="flex flex-col">
    <div className="flex h-[38px] gap-[2px] bg-[#0e0e0e]">
      <Tab className="w-[124px]">Library</Tab>
      <Tab className="w-[112px]">Styles</Tab>
      <ActiveTab className="w-[117px] gap-2 border-l-2 border-l-[#4c4c4c] pl-[6px]">
        <Grip />
        <span>Layers</span>
        <CloseButton />
      </ActiveTab>
      <div className="flex h-9 flex-1 justify-end border border-b-0 border-[#4c4c4c] bg-linear-to-b from-[#363636] to-[#2d2d2d] pr-3">
        <button type="button" aria-label="Panel menu" className="mb-1">
          <MenuIcon />
        </button>
      </div>
      <GripBox />
    </div>
    <div className="border-2 border-b-0 border-[#505050] bg-[#404040]">
      <h2 className="h-10 pl-[6px] leading-10">Ondertitelmenu 2</h2>
      <div className="flex h-[296px] overflow-hidden">
        <ul className="flex-1">
          {layers.map((layer, i) => (
            <li key={i} className="flex h-[38px] items-center border-b-2 border-[#363636] pl-2">
              <button
                type="button"
                aria-label="Toggle visibility"
                className={clsx(boxClass, layer.kind === "highlight" && "opacity-60")}
              >
                {layer.kind !== "highlight" && <EyeIcon color={layer.kind === "image" ? "#e4e4e4" : "#8c8c8c"} />}
              </button>
              <button type="button" aria-label="Toggle lock" className={clsx(boxClass, "ml-[13px]")} />
              {layer.kind === "group" ? (
                <>
                  <button type="button" aria-label="Toggle button" className={clsx(boxClass, "ml-[13px]")}>
                    <svg width="20" height="18" viewBox="0 0 20 18">
                      <rect x="1" width="18" height="10" rx="3" fill="#0c0c0c" />
                      <rect y="2" width="20" height="14" rx="4" fill="#a6a6a6" />
                    </svg>
                  </button>
                  <button type="button" aria-label="Collapse" className="mr-[10px] ml-[22px]">
                    <svg width="16" height="12" viewBox="0 0 16 12">
                      <path d="M0 0h16L8 12z" fill="#c4c4c4" />
                    </svg>
                  </button>
                </>
              ) : (
                <span className="w-[127px]" />
              )}
              <LayerIcon kind={layer.kind} />
              <span className="ml-3 whitespace-nowrap">{layer.name}</span>
            </li>
          ))}
        </ul>
        <VScroll size="sm" className="w-[26px]" thumb="h-[104px]" />
      </div>
    </div>
  </section>
);

export default function App() {
  return (
    <div className="bg-white pt-[82px] pb-[126px] pl-4 font-['Noto_Sans','Open_Sans',sans-serif] text-[22px] leading-7 font-medium text-[#bebebe]">
      <div className="flex">
        <div className="min-w-0 flex-1 bg-[#141414]">
          <Toolbar />
          <main className="mt-[6px] flex gap-2 pr-[6px]">
            <div className="flex w-[542px] shrink-0 flex-col">
              <div className="flex gap-2">
                <ProjectPanel />
                <ViewerPanel />
              </div>
              <div className="flex h-5 items-center pl-[231px]">
                <span className="h-[10px] w-[248px] border-2 border-[#5a5a5a] bg-[#444]" />
              </div>
              <TimelinePanel />
            </div>
            <div className="flex min-w-0 flex-1 flex-col gap-[10px]">
              <PropertiesPanel />
              <LayersPanel />
            </div>
          </main>
        </div>
        {/* sliver of the desktop behind the window */}
        <div className="w-[2px] bg-linear-to-b from-[#7a3a44] via-[#4a3a20] via-60% to-[#7a2a50]" />
      </div>
    </div>
  );
}
